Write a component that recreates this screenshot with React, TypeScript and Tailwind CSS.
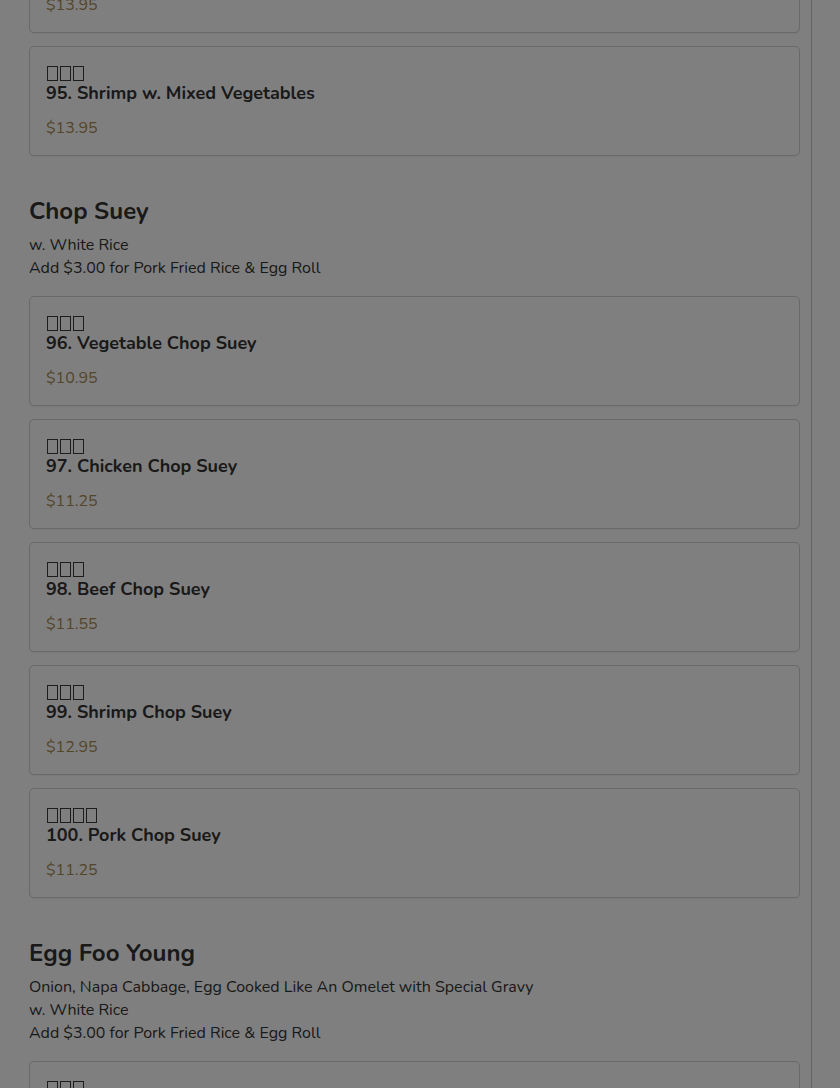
import React from "react";

type Item = { cn: number; name: string; price: string };

const Tofu = ({ n }: { n: number }) => (
  <div className="flex h-[20px] items-center gap-[2px] pl-[1px]" aria-label="Chinese name">
    {Array.from({ length: n }).map((_, i) => (
      <span key={i} className="inline-block h-[15px] w-[11px] border border-[#3a3a3a]" />
    ))}
  </div>
);

const Card = ({ item }: { item: Item }) => (
  <div className="rounded-[5px] border border-[#d2d2d2] bg-white px-4 pt-4 pb-[15px] shadow-[0_1px_2px_rgba(0,0,0,0.06)]">
    <Tofu n={item.cn} />
    <div className="-mt-[1px] text-[18px] font-bold leading-[22px] text-[#333]">{item.name}</div>
    <div className="mt-[12px] text-[16px] leading-[24px] text-[#a88c55]">{item.price}</div>
  </div>
);

const Section = ({ title, desc, items }: { title: string; desc: string[]; items: Item[] }) => (
  <div className="mt-[39px]">
    <h2 className="text-[24px] font-bold leading-[32px] text-[#333]">{title}</h2>
    <div className="mt-[7px] text-[16px] leading-[23px] text-[#333]">
      {desc.map((d) => (
        <div key={d}>{d}</div>
      ))}
    </div>
    <div className="mt-[16px] flex flex-col gap-[13px]">
      {items.map((it) => (
        <Card key={it.name} item={it} />
      ))}
    </div>
  </div>
);

export default function App() {
  return (
    <div
      className="relative h-[1088px] w-[840px] overflow-hidden bg-white"
      style={{ fontFamily: '"Nunito", "Lato", "Noto Sans", sans-serif' }}
    >
      <div className="flex h-full">
        <div className="w-[812px] border-r border-[#c8c8c8] pl-[29px] pr-[11px]">
          <div className="-mt-[77px] flex flex-col gap-[13px]">
            <Card item={{ cn: 3, name: "94. Beef w. Mixed Vegetables", price: "$13.95" }} />
            <Card item={{ cn: 3, name: "95. Shrimp w. Mixed Vegetables", price: "$13.95" }} />
          </div>
          <Section
            title="Chop Suey"
            desc={["w. White Rice", "Add $3.00 for Pork Fried Rice & Egg Roll"]}
            items={[
              { cn: 3, name: "96. Vegetable Chop Suey", price: "$10.95" },
              { cn: 3, name: "97. Chicken Chop Suey", price: "$11.25" },
              { cn: 3, name: "98. Beef Chop Suey", price: "$11.55" },
              { cn: 3, name: "99. Shrimp Chop Suey", price: "$12.95" },
              { cn: 4, name: "100. Pork Chop Suey", price: "$11.25" },
            ]}
          />
          <Section
            title="Egg Foo Young"
            desc={[
              "Onion, Napa Cabbage, Egg Cooked Like An Omelet with Special Gravy",
              "w. White Rice",
              "Add $3.00 for Pork Fried Rice & Egg Roll",
            ]}
            items={[{ cn: 3, name: "101. Vegetable Egg Foo Young", price: "$10.95" }]}
          />
        </div>
        <div className="flex-1" />
      </div>
      <div className="absolute inset-0 bg-black/50" />
    </div>
  );
}
